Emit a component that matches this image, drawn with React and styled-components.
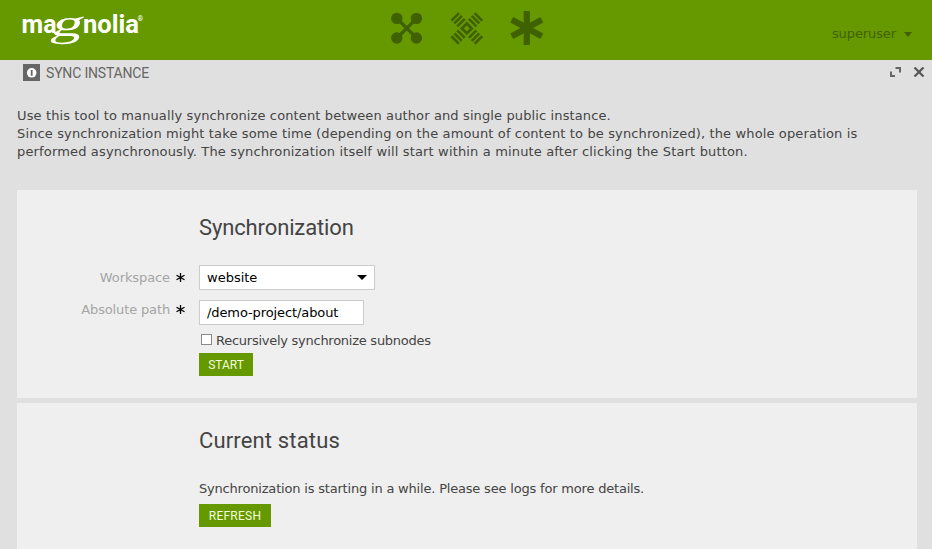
import React from "react";
import styled, { createGlobalStyle } from "styled-components";

const GlobalStyle = createGlobalStyle`
  * { box-sizing: border-box; }
  body {
    margin: 0;
    background: #e0e0e0;
    color: #444;
    font: 13px/18px "DejaVu Sans", Verdana, sans-serif;
    overflow: hidden;
  }
`;

const Shell = styled.div`
  height: 549px;
  overflow: hidden;
`;

const Header = styled.header`
  display: grid;
  grid-template-columns: 390px 1fr auto;
  height: 60px;
  background: #690;
`;

const LogoMark = styled.svg`
  display: block;
  width: 160px;
  height: 60px;
`;

const Launchers = styled.nav`
  display: flex;
  gap: 26px;
  padding-top: 11px;
`;

const LauncherIcon = styled.svg`
  display: block;
  width: 34px;
  height: 35px;
  color: #3f6100;
`;

const UserMenu = styled.div`
  display: flex;
  gap: 8px;
  padding: 25px 20px 0 0;
  color: #3f6100;
  letter-spacing: -0.1px;
`;

const Caret = styled.svg`
  display: block;
  flex: none;
  width: ${(p) => p.$w}px;
  height: 5px;
  margin-top: ${(p) => p.$top || 0}px;
`;

const TitleBar = styled.div`
  display: flex;
  height: 26px;
  padding: 4px 7px 0 23px;
`;

const AppIcon = styled.svg`
  display: block;
  width: 17px;
  height: 17px;
`;

const AppTitle = styled.h1`
  flex: 1;
  margin: 0 0 0 6px;
  color: #666;
  font: 400 14px/18px Roboto, sans-serif;
  letter-spacing: -0.18px;
`;

const WindowActions = styled.div`
  display: flex;
  gap: 12px;
  padding-top: 2px;
`;

const ActionIcon = styled.svg`
  display: block;
  width: 12px;
  height: 12px;
`;

const Intro = styled.p`
  margin: 21px 17px 29px;
`;

const Line = styled.span`
  display: block;
  white-space: nowrap;
  letter-spacing: ${(p) => p.$spacing || "0"};
`;

const Panel = styled.section`
  width: 900px;
  height: ${(p) => p.$height}px;
  margin: 0 0 5px 17px;
  padding-top: 25px;
  background: #efefef;
`;

const Heading = styled.h2`
  margin: 0 0 ${(p) => p.$gap}px 182px;
  font: 400 22px/26px Roboto, sans-serif;
  letter-spacing: ${(p) => p.$spacing};
`;

const Field = styled.div`
  display: grid;
  grid-template-columns: 169px auto;
  column-gap: 13px;
  justify-content: start;
  margin-bottom: 10px;
`;

const Label = styled.label`
  display: flex;
  justify-content: flex-end;
  gap: 6px;
  padding: ${(p) => p.$top}px 1px 0 0;
  color: #a5a5a5;
  letter-spacing: ${(p) => p.$spacing};
`;

const Required = styled.svg`
  display: block;
  width: 9px;
  height: 9px;
  margin-top: 4px;
`;

const Control = styled.div`
  display: flex;
  justify-content: space-between;
  width: ${(p) => p.$width}px;
  height: 25px;
  padding: 3px 7px 0 7px;
  border: 1px solid #ccc;
  background: #fff;
  color: #000;
  letter-spacing: ${(p) => p.$spacing};
`;

const Content = styled.div`
  margin-left: 182px;
`;

const CheckRow = styled.label`
  display: flex;
  gap: 4px;
  height: 18px;
  margin: -3px 0 3px 2px;
  letter-spacing: -0.26px;
`;

const CheckBox = styled.span`
  width: 11px;
  height: 11px;
  margin-top: 2px;
  border: 1px solid #8a8a8a;
  background: #fff;
`;

const Button = styled.button`
  display: block;
  width: ${(p) => p.$width}px;
  height: 23px;
  margin-top: ${(p) => p.$top || 0}px;
  padding: 2px 0 0;
  border: 0;
  background: #690;
  color: #f4fbdc;
  font: 400 12px/21px Roboto, sans-serif;
  letter-spacing: ${(p) => p.$spacing};
`;

function Logo() {
  return (
    <LogoMark viewBox="0 0 160 60" fill="#fff">
      <g fontFamily="Roboto, sans-serif" fontWeight="700" fontSize="26.5">
        <text x="21.5" y="32.5" textLength="35" lengthAdjust="spacingAndGlyphs">ma</text>
        <text x="83" y="32.5" textLength="56" lengthAdjust="spacingAndGlyphs">nolia</text>
      </g>
      <text transform="translate(49.5 35.8) skewX(-17) scale(1.65 1)" fontFamily="Liberation Serif, serif" fontSize="38">g</text>
      <text x="137.5" y="21" fontFamily="Roboto, sans-serif" fontWeight="700" fontSize="7">®</text>
    </LogoMark>
  );
}

function RequiredMark() {
  return (
    <Required viewBox="0 0 9 9" stroke="#000" strokeWidth="1.3">
      <path d="M4.5 0V9M.5 2.3l8 4.4M8.5 2.3l-8 4.4" />
    </Required>
  );
}

function DownCaret({ w, top }) {
  return (
    <Caret $w={w} $top={top} viewBox="0 0 10 5" preserveAspectRatio="none" fill="currentColor">
      <path d="M0 0h10L5 5z" />
    </Caret>
  );
}

export default function App() {
  return (
    <Shell>
      <GlobalStyle />
      <Header>
        <Logo />
        <Launchers>
          <LauncherIcon viewBox="0 0 34 35" fill="currentColor">
            <path d="M7 7.5 26.5 27M26.5 7.5 7 27" stroke="currentColor" strokeWidth="3.2" />
            <circle cx="6.8" cy="7.4" r="5.7" />
            <circle cx="26.4" cy="7.4" r="5.7" />
            <circle cx="6.8" cy="27" r="5.7" />
            <circle cx="26.4" cy="27" r="5.7" />
          </LauncherIcon>
          <LauncherIcon viewBox="0 0 34 35" fill="none" stroke="currentColor" strokeWidth="2.6">
            <g transform="translate(16.8 17.4) rotate(45)">
              <rect x="-3.5" y="-3.5" width="7" height="7" strokeWidth="2.8" />
              <path d="M-5.3-8.2H5.3M-5.3-12.3H5.3M-5.3-16.4H5.3M-5.3 8.2H5.3M-5.3 12.3H5.3M-5.3 16.4H5.3" />
              <path d="M-8.2-5.3V5.3M-12.3-5.3V5.3M-16.4-5.3V5.3M8.2-5.3V5.3M12.3-5.3V5.3M16.4-5.3V5.3" />
            </g>
          </LauncherIcon>
          <LauncherIcon viewBox="0 0 34 35" fill="none" stroke="currentColor" strokeWidth="6.2">
            <path d="M16.8 0V34M1.8 8.7 31.8 25.3M31.8 8.7 1.8 25.3" />
          </LauncherIcon>
        </Launchers>
        <UserMenu>
          <span>superuser</span>
          <DownCaret w={8} top={7} />
        </UserMenu>
      </Header>
      <TitleBar>
        <AppIcon viewBox="0 0 17 17">
          <path d="M0 0h17v17H0z" fill="#666" />
          <circle cx="8.7" cy="8.8" r="4.8" fill="#fff" />
          <path d="M8.7 6v5.8" stroke="#666" strokeWidth="1.8" />
        </AppIcon>
        <AppTitle>SYNC INSTANCE</AppTitle>
        <WindowActions>
          <ActionIcon viewBox="0 0 12 12" fill="none" stroke="#666" strokeWidth="2">
            <path d="M6.5 2H11v4.5M2 5.5V10h4" />
          </ActionIcon>
          <ActionIcon viewBox="0 0 12 12" fill="none" stroke="#5a5a5a" strokeWidth="2.4">
            <path d="m1.5 1.5 9 9m0-9-9 9" />
          </ActionIcon>
        </WindowActions>
      </TitleBar>
      <Intro>
        <Line $spacing="0.122px">Use this tool to manually synchronize content between author and single public instance.</Line>
        <Line $spacing="0.132px">Since synchronization might take some time (depending on the amount of content to be synchronized), the whole operation is</Line>
        <Line $spacing="0.155px">performed asynchronously. The synchronization itself will start within a minute after clicking the Start button.</Line>
      </Intro>
      <Panel $height={208}>
        <Heading $gap={24} $spacing="-0.13px">Synchronization</Heading>
        <Field>
          <Label $top={4} $spacing="-0.1px">Workspace<RequiredMark /></Label>
          <Control $width={176}>
            <span>website</span>
            <DownCaret w={10} top={6} />
          </Control>
        </Field>
        <Field>
          <Label $top={1} $spacing="-0.14px">Absolute path<RequiredMark /></Label>
          <Control $width={165} $spacing="-0.1px">/demo-project/about</Control>
        </Field>
        <Content>
          <CheckRow><CheckBox />Recursively synchronize subnodes</CheckRow>
          <Button $width={54}>START</Button>
        </Content>
      </Panel>
      <Panel $height={160}>
        <Heading $gap={26} $spacing="0.15px">Current status</Heading>
        <Content>
          <Line $spacing="-0.19px">Synchronization is starting in a while. Please see logs for more details.</Line>
          <Button $width={72} $top={6} $spacing="0.25px">REFRESH</Button>
        </Content>
      </Panel>
    </Shell>
  );
}
